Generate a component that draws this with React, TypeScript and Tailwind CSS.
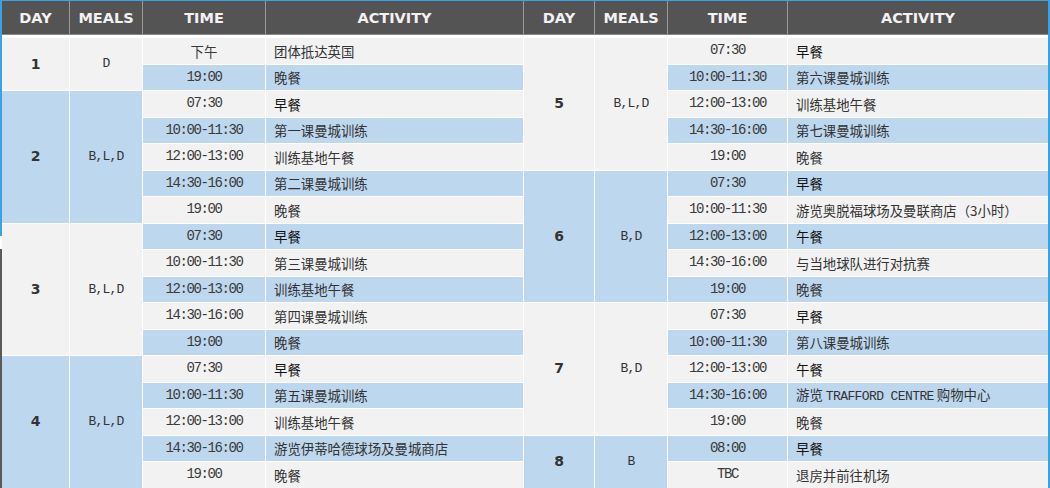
import React from 'react';

interface DayGroup {
  day: string;
  meals: string;
  items: [string, string][];
}

const leftDays: DayGroup[] = [
  { day: '1', meals: 'D', items: [['下午', '团体抵达英国'], ['19:00', '晚餐']] },
  {
    day: '2',
    meals: 'B,L,D',
    items: [
      ['07:30', '早餐'],
      ['10:00-11:30', '第一课曼城训练'],
      ['12:00-13:00', '训练基地午餐'],
      ['14:30-16:00', '第二课曼城训练'],
      ['19:00', '晚餐'],
    ],
  },
  {
    day: '3',
    meals: 'B,L,D',
    items: [
      ['07:30', '早餐'],
      ['10:00-11:30', '第三课曼城训练'],
      ['12:00-13:00', '训练基地午餐'],
      ['14:30-16:00', '第四课曼城训练'],
      ['19:00', '晚餐'],
    ],
  },
  {
    day: '4',
    meals: 'B,L,D',
    items: [
      ['07:30', '早餐'],
      ['10:00-11:30', '第五课曼城训练'],
      ['12:00-13:00', '训练基地午餐'],
      ['14:30-16:00', '游览伊蒂哈德球场及曼城商店'],
      ['19:00', '晚餐'],
    ],
  },
];

const rightDays: DayGroup[] = [
  {
    day: '5',
    meals: 'B,L,D',
    items: [
      ['07:30', '早餐'],
      ['10:00-11:30', '第六课曼城训练'],
      ['12:00-13:00', '训练基地午餐'],
      ['14:30-16:00', '第七课曼城训练'],
      ['19:00', '晚餐'],
    ],
  },
  {
    day: '6',
    meals: 'B,D',
    items: [
      ['07:30', '早餐'],
      ['10:00-11:30', '游览奥脱福球场及曼联商店（3小时）'],
      ['12:00-13:00', '午餐'],
      ['14:30-16:00', '与当地球队进行对抗赛'],
      ['19:00', '晚餐'],
    ],
  },
  {
    day: '7',
    meals: 'B,D',
    items: [
      ['07:30', '早餐'],
      ['10:00-11:30', '第八课曼城训练'],
      ['12:00-13:00', '午餐'],
      ['14:30-16:00', '游览 TRAFFORD CENTRE 购物中心'],
      ['19:00', '晚餐'],
    ],
  },
  { day: '8', meals: 'B', items: [['08:00', '早餐'], ['TBC', '退房并前往机场']] },
];

const spanClass: Record<number, string> = { 2: 'row-span-2', 5: 'row-span-5' };
const headers = ['DAY', 'MEALS', 'TIME', 'ACTIVITY', 'DAY', 'MEALS', 'TIME', 'ACTIVITY'];
const cols = 'grid-cols-[67px_72px_122px_257px_70px_72px_119px_260px]';

const cjk = "font-['Noto_Sans_CJK_SC',sans-serif]";
const mono = "font-['Liberation_Mono','Noto_Sans_CJK_SC',monospace]";

function flatten(days: DayGroup[]) {
  const out: { group: number; first: boolean; size: number; day: string; meals: string; time: string; act: string }[] = [];
  days.forEach((d, gi) => {
    d.items.forEach(([time, act], i) => {
      out.push({ group: gi, first: i === 0, size: d.items.length, day: d.day, meals: d.meals, time, act });
    });
  });
  return out;
}

function Activity({ text }: { text: string }) {
  const strong = text === '早餐' || text === '午餐';
  if (text.includes('TRAFFORD')) {
    return (
      <span>
        游览 <span className={`${mono} tracking-[-0.6px] text-[13px]`}>TRAFFORD CENTRE</span> 购物中心
      </span>
    );
  }
  return <span className={strong ? 'text-[#111]' : ''}>{text}</span>;
}

export default function App() {
  const left = flatten(leftDays);
  const right = flatten(rightDays);
  const cells: React.ReactNode[] = [];

  for (let r = 0; r < 17; r++) {
    const rowBg = r % 2 === 0 ? 'bg-[#f2f2f2]' : 'bg-[#bdd7ee]';
    [left[r], right[r]].forEach((row, side) => {
      const groupBg = row.group % 2 === 0 ? 'bg-[#f2f2f2]' : 'bg-[#bdd7ee]';
      if (row.first) {
        cells.push(
          <div
            key={`d-${side}-${r}`}
            className={`${spanClass[row.size]} ${groupBg} flex items-center justify-center font-['DejaVu_Sans',sans-serif] font-bold text-[14px] text-[#333]`}
          >
            {row.day}
          </div>
        );
        cells.push(
          <div
            key={`m-${side}-${r}`}
            className={`${spanClass[row.size]} ${groupBg} flex items-center justify-center ${mono} text-[13px] tracking-[-0.8px] text-[#333]`}
          >
            {row.meals}
          </div>
        );
      }
      cells.push(
        <div
          key={`t-${side}-${r}`}
          className={`${rowBg} flex items-center justify-center ${mono} text-[14px] tracking-[-1.4px] text-[#3a3a3a]`}
        >
          {row.time === '下午' ? <span className={`${cjk} tracking-normal text-[13.4px]`}>下午</span> : row.time}
        </div>
      );
      cells.push(
        <div key={`a-${side}-${r}`} className={`${rowBg} flex items-center pl-2 ${cjk} text-[13.4px] text-[#333] whitespace-nowrap`}>
          <Activity text={row.act} />
        </div>
      );
    });
  }

  return (
    <div className="w-[1050px] h-[488px] overflow-hidden bg-white flex">
      <div className="w-[2px] flex flex-col">
        <div className="h-[236px] bg-[#3aa2e2]" />
        <div className="h-[13px] bg-white" />
        <div className="flex-1 bg-[#5a5a5a]" />
      </div>
      <div className="flex-1 flex flex-col border-t border-[#3aa2e2]">
        <div className={`grid ${cols} gap-px bg-[#9a9a9a] h-[34px] border-b border-[#8a8a8a]`}>
          {headers.map((h, i) => (
            <div
              key={i}
              className="bg-[#545454] flex items-center justify-center pt-[3px] font-['DejaVu_Sans',sans-serif] font-bold text-[14.5px] text-[#f2f2f2]"
            >
              {h}
            </div>
          ))}
        </div>
        <div className="h-[3px] bg-white" />
        <div className={`grid ${cols} auto-rows-[25.5px] gap-px bg-white`}>{cells}</div>
      </div>
      <div className="w-[2px] bg-[#3aa2e2]" />
    </div>
  );
}
